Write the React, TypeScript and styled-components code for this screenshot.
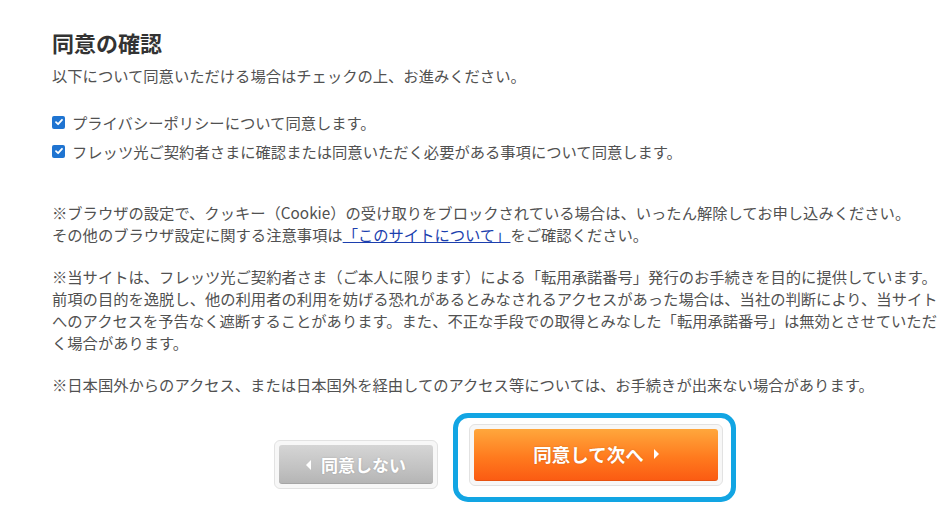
import React from "react";
import styled, { createGlobalStyle } from "styled-components";

const GlobalStyle = createGlobalStyle`
  html, body {
    margin: 0;
    padding: 0;
    background: #ffffff;
  }
  body {
    font-family: "Noto Sans CJK JP", "Noto Sans", sans-serif;
    color: #515151;
  }
`;

const Page = styled.main`
  width: 888px;
  padding: 27px 0 0 52px;
`;

const Title = styled.h1`
  margin: 0;
  font-size: 22px;
  line-height: 30px;
  font-weight: 700;
  color: #333333;
`;

const Lead = styled.p`
  margin: 7px 0 0;
  font-size: 15.3px;
  line-height: 22px;
`;

const CheckList = styled.div`
  margin-top: 25px;
  display: flex;
  flex-direction: column;
  gap: 7px;
`;

const CheckRow = styled.label`
  display: flex;
  align-items: center;
  gap: 7px;
  font-size: 15.3px;
  line-height: 22px;
  white-space: nowrap;
`;

const CheckBox = styled.span`
  width: 13px;
  height: 13px;
  border-radius: 2px;
  background: #1f74d1;
  display: inline-flex;
  align-items: center;
  justify-content: center;
  flex: none;
`;

const Note = styled.p<{ $top: number }>`
  margin: ${(p) => p.$top}px 0 0;
  font-size: 15.3px;
  line-height: 22.3px;
  white-space: nowrap;
`;

const Link = styled.a`
  color: #1c3fae;
  text-decoration: underline;
`;

const ButtonRow = styled.div`
  margin-top: 18px;
  display: flex;
  justify-content: center;
  align-items: flex-start;
  gap: 15px;
  padding-left: 18px;
`;

const ButtonFrame = styled.div<{ $top?: number }>`
  margin-top: ${(p) => p.$top ?? 0}px;
  padding: 4px;
  border: 1px solid #e2e2e2;
  border-radius: 6px;
  background: #f7f7f7;
`;

const Highlight = styled.div`
  border: 5px solid #12a5e3;
  border-radius: 15px;
  padding: 6px 8px 11px 11px;
`;

const Btn = styled.button<{ $primary?: boolean }>`
  display: flex;
  align-items: center;
  justify-content: center;
  gap: 10px;
  width: ${(p) => (p.$primary ? 244 : 154)}px;
  height: ${(p) => (p.$primary ? 52 : 39)}px;
  border: none;
  border-radius: 3px;
  font-family: inherit;
  font-weight: 700;
  font-size: ${(p) => (p.$primary ? 18.5 : 17)}px;
  color: #ffffff;
  text-shadow: 0 0 2px rgba(0, 0, 0, 0.18);
  background: ${(p) =>
    p.$primary
      ? "linear-gradient(to bottom, #ffa73c 0%, #ff7a1e 55%, #fb5a12 100%)"
      : "linear-gradient(to bottom, #d5d5d5 0%, #c2c2c2 60%, #b4b4b4 100%)"};
  box-shadow: inset 0 -1px 0 rgba(0, 0, 0, 0.08);
  cursor: pointer;
  padding: ${(p) => (p.$primary ? "0 0 2px 0" : "0")};
`;

const Arrow = styled.span<{ $dir: "left" | "right" }>`
  width: 0;
  height: 0;
  border-top: 5px solid transparent;
  border-bottom: 5px solid transparent;
  ${(p) =>
    p.$dir === "left"
      ? "border-right: 5px solid #ffffff;"
      : "border-left: 5px solid #ffffff;"}
`;

const Check = () => (
  <CheckBox>
    <svg width="10" height="10" viewBox="0 0 10 10">
      <path
        d="M2 5.2 L4.1 7.2 L8 2.8"
        fill="none"
        stroke="#ffffff"
        strokeWidth="1.8"
        strokeLinecap="round"
        strokeLinejoin="round"
      />
    </svg>
  </CheckBox>
);

export default function App() {
  return (
    <>
      <GlobalStyle />
      <Page>
        <Title>同意の確認</Title>
        <Lead>以下について同意いただける場合はチェックの上、お進みください。</Lead>
        <CheckList>
          <CheckRow>
            <Check />
            プライバシーポリシーについて同意します。
          </CheckRow>
          <CheckRow>
            <Check />
            フレッツ光ご契約者さまに確認または同意いただく必要がある事項について同意します。
          </CheckRow>
        </CheckList>
        <Note $top={39}>
          ※ブラウザの設定で、クッキー（Cookie）の受け取りをブロックされている場合は、いったん解除してお申し込みください。
          <br />
          その他のブラウザ設定に関する注意事項は<Link href="#">「このサイトについて」</Link>をご確認ください。
        </Note>
        <Note $top={19}>
          ※当サイトは、フレッツ光ご契約者さま（ご本人に限ります）による「転用承諾番号」発行のお手続きを目的に提供しています。
          <br />
          前項の目的を逸脱し、他の利用者の利用を妨げる恐れがあるとみなされるアクセスがあった場合は、当社の判断により、当サイト
          <br />
          へのアクセスを予告なく遮断することがあります。また、不正な手段での取得とみなした「転用承諾番号」は無効とさせていただ
          <br />
          く場合があります。
        </Note>
        <Note $top={19}>
          ※日本国外からのアクセス、または日本国外を経由してのアクセス等については、お手続きが出来ない場合があります。
        </Note>
        <ButtonRow>
          <ButtonFrame $top={27}>
            <Btn>
              <Arrow $dir="left" />
              同意しない
            </Btn>
          </ButtonFrame>
          <Highlight>
            <ButtonFrame>
              <Btn $primary>
                同意して次へ
                <Arrow $dir="right" />
              </Btn>
            </ButtonFrame>
          </Highlight>
        </ButtonRow>
      </Page>
    </>
  );
}
